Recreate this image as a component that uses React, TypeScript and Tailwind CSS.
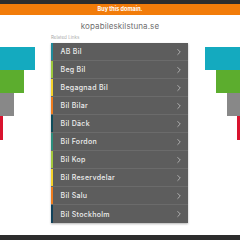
import React from 'react';
import { ChevronRight } from 'lucide-react';

const links = [
  { label: 'AB Bil', color: 'bg-[#1f8a9a]' },
  { label: 'Beg Bil', color: 'bg-[#9cc83c]' },
  { label: 'Begagnad Bil', color: 'bg-[#f3d12b]' },
  { label: 'Bil Bilar', color: 'bg-[#ee7c1d]' },
  { label: 'Bil Däck', color: 'bg-[#0f4c5a]' },
  { label: 'Bil Fordon', color: 'bg-[#2c8d7c]' },
  { label: 'Bil Kop', color: 'bg-[#a3c83c]' },
  { label: 'Bil Reservdelar', color: 'bg-[#f3d12b]' },
  { label: 'Bil Salu', color: 'bg-[#ee7c1d]' },
  { label: 'Bil Stockholm', color: 'bg-[#12425a]' },
];

export default function App() {
  return (
    <div className="w-[240px] h-[240px] bg-white flex flex-col overflow-hidden font-['Inter','Liberation_Sans',sans-serif]">
      <div className="h-[4px] bg-[#2d2d2d]" />
      <div className="h-[11px] bg-[#f27c0a] flex items-center justify-center">
        <span className="text-[5.5px] font-bold text-white leading-none">Buy this domain.</span>
      </div>

      <div className="h-[21px] flex items-center justify-center">
        <span className="text-[8px] text-[#6f6f6f] leading-none tracking-[0.1px]">kopabileskilstuna.se</span>
      </div>

      <div className="flex">
        {/* left decoration */}
        <div className="w-[51px] pt-[10.5px] flex flex-col items-start">
          <div className="w-[35px] h-[23.3px] bg-[#14aabf]" />
          <div className="w-[24px] h-[23.3px] bg-[#5cad2e]" />
          <div className="w-[14px] h-[23.3px] bg-[#888]" />
          <div className="w-[3px] h-[23.3px] bg-[#d9132e]" />
        </div>

        {/* links */}
        <div className="w-[136.5px] flex flex-col">
          <div className="h-[7.3px] flex items-start">
            <span className="text-[4.5px] text-[#aaa] leading-none">Related Links</span>
          </div>
          <div className="bg-[#5d5d5d] shadow-[0_1px_2px_rgba(0,0,0,0.3)]">
            {links.map((l, i) => (
              <div
                key={l.label}
                className={`h-[18px] flex items-center ${i < links.length - 1 ? 'border-b border-[#6b6b6b]' : ''}`}
              >
                <div className={`w-[2px] h-full ${l.color}`} />
                <span className="ml-[7.5px] flex-1 text-[7px] font-medium text-[#eee] leading-none tracking-[0.3px]">{l.label}</span>
                <ChevronRight className="mr-[3.5px] text-[#ddd]" size={10} strokeWidth={1.5} />
              </div>
            ))}
          </div>
        </div>

        {/* right decoration */}
        <div className="flex-1 pt-[10.5px] flex flex-col items-end">
          <div className="w-[35px] h-[23.3px] bg-[#14aabf]" />
          <div className="w-[24.3px] h-[23.3px] bg-[#5cad2e]" />
          <div className="w-[13.3px] h-[23.3px] bg-[#888]" />
          <div className="w-[2.7px] h-[23.3px] bg-[#d9132e]" />
        </div>
      </div>

      <div className="mt-auto h-[5px] bg-[#2d2d2d]" />
    </div>
  );
}
